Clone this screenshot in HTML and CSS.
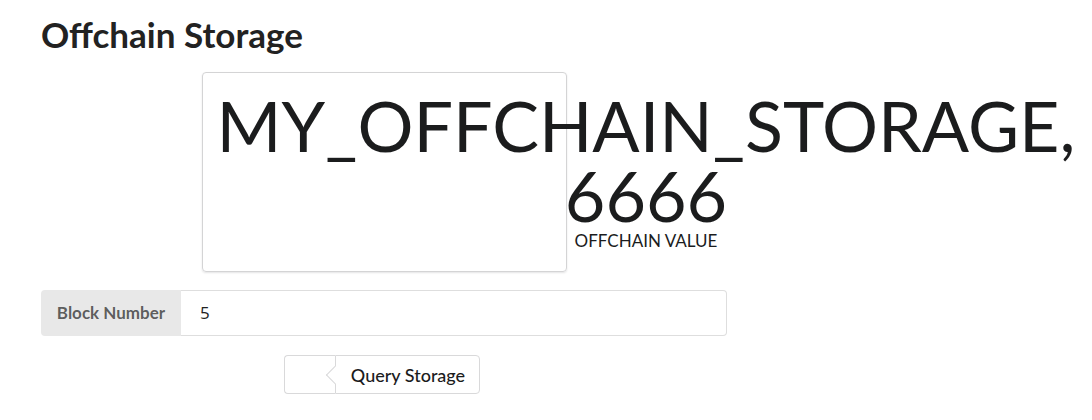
FILE: index.html
```html
<!DOCTYPE html>
<html>
<head>
<meta charset="utf-8">
<link rel="stylesheet" href="styles.css">
</head>
<body>
<div class="page">
  <h1 class="title">Offchain Storage</h1>
  <div class="col">
    <div class="card">
      <div class="statistic">
        <div class="value">MY_OFFCHAIN_STORAGE,<br>6666</div>
        <div class="label">OFFCHAIN VALUE</div>
      </div>
    </div>
    <div class="labeled-input">
      <div class="in-label">Block Number</div>
      <input class="in-field" type="text" value="5">
    </div>
    <div class="labeled-button">
      <div class="btn-part"></div>
      <div class="btn-label">Query Storage</div>
    </div>
  </div>
</div>
</body>
</html>
```

FILE: styles.css
```css
html, body {
  margin: 0;
  padding: 0;
  background: #ffffff;
  font-family: Lato, "Noto Sans", sans-serif;
  color: rgba(0,0,0,.87);
}
.page {
  padding: 13px 0 0 41px;
}
.title {
  margin: 0;
  font-size: 35px;
  font-weight: 700;
  line-height: 42px;
  color: #222;
  padding-left: 0;
}
.col {
  width: 686px;
  display: flex;
  flex-direction: column;
  align-items: center;
  margin-top: 17px;
}
.card {
  width: 365px;
  height: 200px;
  border: 1px solid #d4d4d5;
  border-radius: 4px;
  box-shadow: 0 1px 2px 0 rgba(34,36,38,.12);
  padding: 17px 0 0 19px;
  box-sizing: border-box;
  margin-left: 1px;
}
.statistic {
  width: 848px;
  display: flex;
  flex-direction: column;
  align-items: center;
  text-align: center;
}
.value {
  font-size: 70px;
  line-height: 70px;
  font-weight: 400;
  color: #1b1c1d;
  white-space: nowrap;
}
.label {
  font-size: 17px;
  line-height: 20px;
  font-weight: 400;
  color: #1b1c1d;
  margin-top: 1px;
}
.labeled-input {
  align-self: stretch;
  display: flex;
  height: 46px;
  margin-top: 18px;
  box-sizing: border-box;
}
.in-label {
  width: 140px;
  background: #e8e8e8;
  border-radius: 4px 0 0 4px;
  font-weight: 700;
  font-size: 17px;
  color: rgba(0,0,0,.62);
  display: flex;
  align-items: center;
  justify-content: center;
  box-sizing: border-box;
  padding-bottom: 2px;
}
.in-field {
  flex: 1;
  margin: 0;
  border: 1px solid #dedede;
  border-left: none;
  border-radius: 0 4px 4px 0;
  padding: 0 0 2px 19px;
  font-family: "Open Sans", sans-serif;
  font-size: 17px;
  color: #222;
  outline: none;
  background: #fff;
}
.labeled-button {
  display: flex;
  height: 39px;
  margin-top: 19px;
  margin-left: -4px;
}
.btn-part {
  width: 51px;
  border: 1px solid #d9d9da;
  border-right: none;
  border-radius: 4px 0 0 4px;
  box-sizing: border-box;
  background: #fff;
}
.btn-label {
  position: relative;
  border: 1px solid #d9d9da;
  border-radius: 0 4px 4px 0;
  box-sizing: border-box;
  padding: 0 14px 0 15px;
  display: flex;
  align-items: center;
  font-size: 18px;
  font-weight: 500;
  color: #1b1c1d;
  background: #fff;
}
.btn-label::before {
  content: "";
  position: absolute;
  left: -1px;
  top: 50%;
  width: 13px;
  height: 13px;
  background: #fff;
  border-left: 1px solid #d9d9da;
  border-bottom: 1px solid #d9d9da;
  transform: translate(-50%, -50%) rotate(45deg);
  box-sizing: border-box;
}
```
